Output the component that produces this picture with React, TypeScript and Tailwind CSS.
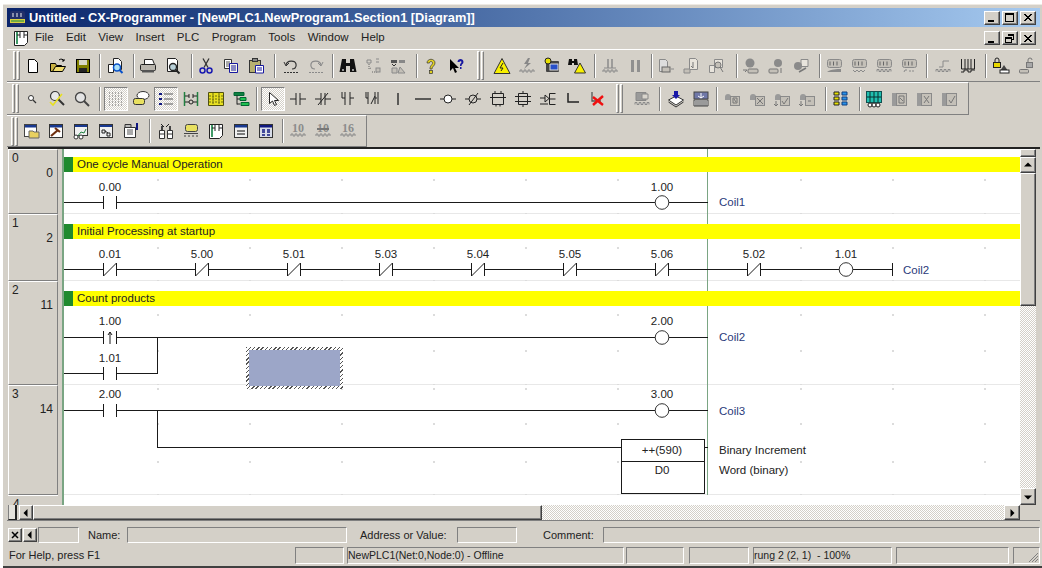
import React from 'react';

const grayS = '#8a8a8a';
const grayF = '#c4c0b8';

// small helpers for the disabled toolbar glyphs
const Wave = ({ y = 14 }: { y?: number }) => (
  <path d={`M2 ${y + 2}v-2h2v2h2v-2h2v2h2v-2h2v2h2v-2h2v2`} fill="none" stroke={grayS} />
);
const GPlc = ({ dark, children }: { dark?: boolean; children?: React.ReactNode }) => (
  <>
    <rect x="2.5" y="2.5" width="14" height="8" rx="2" fill={dark ? '#8a8a8a' : grayF} stroke={grayS} />
    <path d="M5 4.5v4M8.5 4.5v4M12 4.5v4" stroke={dark ? '#eee' : '#666'} />
    {children}
  </>
);
const GNote = ({ mark }: { mark: string }) => (
  <>
    <path d="M2 7a3 3 0 016 0v3H2z" fill="#9a9a9a" />
    <rect x="7.5" y="6.5" width="9" height="9" fill={grayF} stroke={grayS} />
    <path d={mark} fill="none" stroke="#777" />
  </>
);
const GBook = ({ mark }: { mark: string }) => (
  <>
    <path d="M2 3h5v13H2z" fill="#9a9a9a" />
    <rect x="6.5" y="3.5" width="10" height="12" fill={grayF} stroke={grayS} />
    <path d={mark} fill="none" stroke="#777" />
  </>
);
const GNum = ({ t, slash }: { t: string; slash?: boolean }) => (
  <>
    <text x="9" y="10" textAnchor="middle" fontSize="12" fontWeight="bold" fontFamily="Liberation Serif, serif" fill="#8c8c8c">{t}</text>
    {slash && <path d="M3 7h12" stroke="#777" strokeWidth="2" />}
    <Wave y={12} />
  </>
);

const icons: Record<string, React.ReactNode> = {
  new: <path d="M4.5 2.5h6l3 3v10h-9z" fill="#fff" stroke="#000" />,
  open: (
    <>
      <path d="M1.5 6.5h5l1 2h5v6h-11z" fill="#c8b040" stroke="#000" />
      <path d="M3.5 14.5l3-5h10l-3 5z" fill="#f0dc70" stroke="#000" />
      <path d="M10 3c2-1.5 4-1 5 1M15 2v2h-2" fill="none" stroke="#000" />
    </>
  ),
  save: (
    <>
      <rect x="2.5" y="2.5" width="13" height="13" fill="#808000" stroke="#000" />
      <rect x="5" y="3" width="8" height="5" fill="#d8d8c8" />
      <rect x="5" y="11" width="8" height="4" fill="#222" />
    </>
  ),
  docfind: (
    <>
      <path d="M2.5 7.5h5v8h-5z" fill="#fff" stroke="#222" />
      <path d="M7.5 1.5h5l3 3v8h-8z" fill="#fff" stroke="#222" />
      <circle cx="11" cy="10.5" r="3.5" fill="#a8e0f8" stroke="#0850c8" strokeWidth="1.5" />
      <path d="M13.5 13l3 3" stroke="#0850c8" strokeWidth="2" />
    </>
  ),
  print: (
    <>
      <path d="M5.5 2.5h8l2 5h-10z" fill="#fff" stroke="#222" />
      <rect x="1.5" y="7.5" width="15" height="6" rx="1" fill="#b8b4ac" stroke="#222" />
      <rect x="3" y="13" width="12" height="2.5" fill="#555" />
    </>
  ),
  preview: (
    <>
      <path d="M3.5 1.5h8l2 2v11h-10z" fill="#fff" stroke="#222" />
      <circle cx="9" cy="10" r="3.5" fill="#b8d0d8" stroke="#222" strokeWidth="1.3" />
      <path d="M11.5 12.5l4 4" stroke="#222" strokeWidth="2" />
    </>
  ),
  cut: (
    <>
      <path d="M6 1.5l5 9M12 1.5l-5 9" stroke="#333" strokeWidth="1.3" />
      <circle cx="5.5" cy="13.5" r="2.5" fill="none" stroke="#1818b0" strokeWidth="1.5" />
      <circle cx="12.5" cy="13.5" r="2.5" fill="none" stroke="#1818b0" strokeWidth="1.5" />
    </>
  ),
  copy: (
    <>
      <path d="M2.5 2.5h7v9h-7z" fill="#fff" stroke="#333" />
      <path d="M4 5h4M4 7h4M4 9h4" stroke="#555" />
      <path d="M7.5 6.5h8v9h-8z" fill="#f8f8e8" stroke="#1818a0" />
      <path d="M9 9h5M9 11h5M9 13h5" stroke="#1818a0" />
    </>
  ),
  paste: (
    <>
      <rect x="2.5" y="3.5" width="11" height="12" fill="#b8b070" stroke="#333" />
      <rect x="5.5" y="1.5" width="5" height="3" fill="#888" stroke="#333" />
      <path d="M8.5 8.5h8V16h-8z" fill="#fff" stroke="#1818a0" />
      <path d="M10 11h5M10 13h5" stroke="#1818a0" />
    </>
  ),
  undo: (
    <>
      <path d="M4 8c1-5 9-5 10-1s-2 5-4 5" fill="none" stroke="#333" strokeWidth="1.2" />
      <path d="M2 5l2 4 3-3" fill="none" stroke="#333" />
      <path d="M2 15.5h14" stroke="#333" strokeDasharray="2 1" />
    </>
  ),
  redo: (
    <>
      <path d="M14 8c-1-5-9-5-10-1s2 5 4 5" fill="none" stroke={grayS} strokeWidth="1.2" />
      <path d="M16 5l-2 4-3-3" fill="none" stroke={grayS} />
      <path d="M2 15.5h14" stroke={grayS} strokeDasharray="2 1" />
    </>
  ),
  binoc: (
    <>
      <path d="M3 2h4v4h4V2h4l2.5 13H11V9H7v6H.5z" fill="#111" />
      <rect x="3" y="12" width="2" height="2" fill="#999" />
      <rect x="13" y="12" width="2" height="2" fill="#999" />
    </>
  ),
  swap: (
    <>
      <path d="M3 3h4v3H3zM12 2h3M12 5h3" fill="none" stroke={grayS} />
      <path d="M5 7v5l2-1M13 15H8" fill="none" stroke="#666" strokeDasharray="1 1" />
      <rect x="12" y="11" width="4" height="4" fill={grayF} stroke={grayS} />
    </>
  ),
  xref: (
    <>
      <path d="M2 3h6v3H2z" fill="#555" />
      <path d="M3 7l2 2 2-2" fill="none" stroke="#333" />
      <path d="M10 3h6v3h-6z" fill="#888" />
      <path d="M3 11h5v5H3zM11 10l5 6H9z" fill={grayF} stroke={grayS} />
    </>
  ),
  help: (
    <>
      <path d="M5 6c0-5 8-5 8 0 0 3-3 3-3 6H8c0-4 2.500-4 2.500-6 0-2-3-2-3 0z" fill="#e0d020" stroke="#333" strokeWidth=".7" />
      <rect x="7.5" y="13.5" width="3" height="3" fill="#e0d020" stroke="#333" strokeWidth=".7" />
    </>
  ),
  whats: (
    <>
      <path d="M3 2v12l3-3 2 5 2-1-2-4h4z" fill="#000" />
      <path d="M10.500 5c0-4 6-4 6 0 0 2-2 2-2 4h-1.500c0-3 1.500-3 1.500-4s-2-1-2 0zM13 10h1.500v2H13z" fill="#1818a0" />
    </>
  ),
  warn: (
    <>
      <path d="M9 1.5l8 15H1z" fill="#f8f000" stroke="#333" />
      <path d="M10 6l-3 5h3l-2 3" fill="none" stroke="#222" />
    </>
  ),
  flash: (
    <>
      <path d="M10 1L6 7h3L6 12l7-6h-3l2-5z" fill="#888" />
      <Wave y={13} />
    </>
  ),
  compile: (
    <>
      <rect x="3" y="4" width="13" height="11" rx="1" fill="#444" />
      <rect x="7" y="7" width="8" height="6" fill="#2850c8" stroke="#ddd" />
      <circle cx="5" cy="4" r="3" fill="#e8e000" stroke="#222" />
    </>
  ),
  binwarn: (
    <>
      <path d="M1 2h3v2h2V2h3l1 6H6V6H4v2H0z" fill="#111" />
      <path d="M12 6l5.5 10h-11z" fill="#f8f000" stroke="#333" />
    </>
  ),
  gII: (
    <>
      <path d="M7 2v9M11 2v9" stroke={grayS} strokeWidth="1.5" />
      <path d="M3 11h12" stroke={grayS} />
      <Wave y={13} />
    </>
  ),
  gPause: <path d="M5 3h3v12H5zM11 3h3v12h-3z" fill="#909090" />,
  gDoc: (
    <>
      <path d="M2.5 2.5h6l2 2v10h-8z" fill="#ddd" stroke={grayS} />
      <rect x="5" y="10" width="8" height="5" fill={grayF} stroke="#666" />
      <path d="M14 12h3" stroke={grayS} />
    </>
  ),
  gDocUp: (
    <>
      <path d="M7.5 1.5h6l2 2v9h-8z" fill="#e8e4dc" stroke={grayS} />
      <path d="M2 12h6v4H2z" fill={grayF} stroke={grayS} />
      <path d="M11 5v6l-2-2" fill="none" stroke="#777" />
    </>
  ),
  gDocX: (
    <>
      <path d="M2.5 8.5h5v7h-5z" fill="#e8e4dc" stroke={grayS} />
      <path d="M7.5 2.5h8v8h-8z" fill="#e8e4dc" stroke={grayS} />
      <circle cx="11" cy="8" r="3" fill={grayF} stroke="#777" />
      <path d="M13 10l3 5" stroke="#777" />
    </>
  ),
  gGear: (
    <>
      <circle cx="8" cy="6" r="4.5" fill="#8a8a8a" />
      <rect x="6" y="12" width="10" height="4" rx="1" fill={grayF} stroke="#777" />
      <path d="M1 13h4l-2 2" fill="none" stroke="#777" />
    </>
  ),
  gGear2: (
    <>
      <circle cx="11" cy="6" r="4" fill="#8a8a8a" />
      <rect x="2" y="12" width="9" height="4" rx="1" fill={grayF} stroke="#777" />
      <path d="M14 11v5" stroke="#777" />
    </>
  ),
  gGear3: (
    <>
      <path d="M9 2.5h7v7H9z" fill="#e8e4dc" stroke={grayS} />
      <circle cx="6" cy="9" r="4" fill="#8a8a8a" />
      <path d="M7 15l7-4" stroke="#777" strokeWidth="1.5" />
    </>
  ),
  gPlc1: (
    <GPlc>
      <path d="M2 15c4-3 10-3 14-3v3z" fill="#8a8a8a" />
    </GPlc>
  ),
  gPlc2: (
    <GPlc>
      <path d="M3 13l2 2 2-2 2 2 2-2 2 2 2-2" fill="none" stroke={grayS} />
    </GPlc>
  ),
  gPlc3: (
    <GPlc>
      <Wave y={12.5} />
    </GPlc>
  ),
  gPlc4: (
    <GPlc>
      <path d="M4 15l1-2h2M10 15v-2M13 13v2" fill="none" stroke={grayS} />
    </GPlc>
  ),
  gStep: (
    <>
      <path d="M5 10h4V4h6" fill="none" stroke={grayS} />
      <Wave y={12.5} />
    </>
  ),
  bars: <path d="M2.5 2v10h13V2M6 2v10M9 2v10M12 2v10M2 15h3v-2h4v2h3v-2h4" fill="none" stroke="#222" />,
  lock: (
    <>
      <rect x="1.5" y="5.5" width="7" height="5" fill="#e8d800" stroke="#222" />
      <path d="M3 5V3a2 2 0 014 0v2" fill="none" stroke="#222" />
      <path d="M12 8l4 6H8z" fill="#444" />
      <rect x="8" y="13" width="9" height="3" fill="#fff" stroke="#222" />
    </>
  ),
  glock: (
    <>
      <rect x="9.5" y="5.5" width="6" height="5" fill="#a8a8a8" stroke="#777" />
      <path d="M11 5V3a2 2 0 014 0" fill="none" stroke="#777" />
      <rect x="2.5" y="12.5" width="9" height="3.5" rx="1" fill={grayF} stroke="#777" />
    </>
  ),
  magS: (
    <>
      <circle cx="8" cy="8" r="2.5" fill="#fff" stroke="#333" />
      <path d="M10 10l3 3" stroke="#333" strokeWidth="1.3" />
    </>
  ),
  magC: (
    <>
      <circle cx="7" cy="6" r="4.5" fill="#e8e8e8" stroke="#333" strokeWidth="1.2" />
      <path d="M10 9l6 6" stroke="#333" strokeWidth="2" />
      <path d="M2 12l3 3 9-11" fill="none" stroke="#e8e020" strokeWidth="1.6" />
    </>
  ),
  mag: (
    <>
      <circle cx="7.5" cy="7.5" r="5" fill="#e4e4e4" stroke="#444" strokeWidth="1.3" />
      <path d="M11 11l5 5" stroke="#444" strokeWidth="2" />
    </>
  ),
  grid: <path d="M2 3h14M2 6h14M2 9h14M2 12h14M2 15h14" stroke="#666" strokeDasharray="1 2" fill="none" />,
  comment: (
    <>
      <ellipse cx="11" cy="5.5" rx="6" ry="4" fill="#fff" stroke="#333" />
      <rect x="1.5" y="8.5" width="11" height="6" rx="2" fill="#e8e060" stroke="#333" />
    </>
  ),
  list: (
    <>
      <path d="M7 4h9M7 9h9M7 14h9" stroke="#888" strokeWidth="1.5" />
      <path d="M2 3h3v2H2zM2 8h3v2H2zM2 13h3v2H2z" fill="#101880" />
    </>
  ),
  rung: (
    <>
      <path d="M2.5 2v14M15.5 2v14" stroke="#208040" strokeWidth="1.5" />
      <path d="M3 6h4M11 6h4M7 4v4M11 4v4M3 12h4M11 12h4" stroke="#222" />
      <circle cx="9" cy="12" r="2" fill="none" stroke="#222" />
    </>
  ),
  ylist: (
    <>
      <path d="M1.5 2.5h15v13h-15z" fill="#e8e020" stroke="#505010" />
      <path d="M6 3v12M12 3v12M2 6h14M2 9h14M2 12h14" stroke="#6a6a10" strokeDasharray="2 1" />
    </>
  ),
  tree: (
    <>
      <path d="M2 2.5h10v3H2z" fill="#108040" stroke="#063" />
      <path d="M5 5.5v9M5 9h3M5 14h3" stroke="#222" fill="none" />
      <path d="M8 7.5h6v3H8zM9 12.5h8v3H9z" fill="#20c050" stroke="#063" />
    </>
  ),
  arrow: <path d="M5.5 2.5v11l3-2.5 2 4.5 2-1-2-4h4z" fill="#fff" stroke="#222" />,
  no: <path d="M1 9h6M7 3v12M11 3v12M11 9h6" stroke="#222" fill="none" />,
  nc: <path d="M1 9h6M7 3v12M11 3v12M11 9h6M4 15L14 3" stroke="#222" fill="none" />,
  hno: <path d="M3 2v6h3M6 2v13M11 2v13M11 8h4" stroke="#222" fill="none" />,
  hnc: <path d="M2 2v6h2M4 2v12M7 14l4-8M11 2v12M11 8h2M14 2v12" stroke="#222" fill="none" />,
  vline: <path d="M9 3v12" stroke="#333" strokeWidth="1.5" />,
  hline: <path d="M1 9h16" stroke="#333" strokeWidth="1.5" />,
  coil: (
    <>
      <path d="M1 9h4M13 9h4" stroke="#222" />
      <circle cx="9" cy="9" r="4" fill="#fff" stroke="#222" />
    </>
  ),
  coiln: (
    <>
      <path d="M1 9h4M13 9h4M5 15L14 3" stroke="#222" />
      <circle cx="9" cy="9" r="4" fill="none" stroke="#222" />
    </>
  ),
  box: <path d="M3.5 3.5h11v11h-11zM1 7.5h16M7 14.5v2M11 14.5v2M6 1v2M12 1v2" stroke="#222" fill="none" />,
  box2: <path d="M4.5 3.5h9v11h-9zM1 6.5h16M1 11.5h16M9 1v2M9 15v2" stroke="#222" fill="none" />,
  instr: <path d="M1 8h5M6 5v7l4-3.5zM1 14h8M10.5 3.5h6M10.5 3.5v11M10.5 9h6M10.5 14.5h6" stroke="#222" fill="none" />,
  corner: <path d="M4 3v9h11" stroke="#222" strokeWidth="1.5" fill="none" />,
  del: (
    <>
      <path d="M3 2v9h9" stroke="#555" strokeWidth="1.3" fill="none" />
      <path d="M4 7l10 8M14 6L4 15" stroke="#f01010" strokeWidth="2.4" />
    </>
  ),
  gDl: (
    <>
      <path d="M3 2.5h10v8H3z" fill="#9a9a9a" stroke="#888" />
      <path d="M9 4h6v5H9z" fill="#d8d4cc" stroke="#888" />
      <Wave y={12.5} />
    </>
  ),
  dlst: (
    <>
      <path d="M1.5 10L9 6l7.5 4L9 15z" fill="#fff" stroke="#333" />
      <path d="M1.5 12L9 17l7.5-5" fill="none" stroke="#333" />
      <path d="M7 1h4v4h2l-4 4-4-4h2z" fill="#1818a8" />
    </>
  ),
  dlbd: (
    <>
      <rect x="2" y="2" width="14" height="7" fill="#7078a8" stroke="#444" />
      <path d="M9 3v5M6 6l3 2 3-2" stroke="#fff" fill="none" />
      <path d="M2 10h14v6H2z" fill="#f0f0f0" stroke="#444" />
      <path d="M4 11v5M6 11v5M8 11v5M10 11v5M12 11v5M14 11v5" stroke="#444" />
    </>
  ),
  gN1: <GNote mark="M10 8h4v5h-4zM11 9l2 3" />,
  gN2: <GNote mark="M9 8l6 6M15 8l-6 6" />,
  gN3: <GNote mark="M9 11l2 3 4-6M3 11v5M1 14l2 2 2-2" />,
  gN4: <GNote mark="M10 11h3M3 11v5M1 14l2 2 2-2" />,
  rows: (
    <>
      <path d="M2 2h5v3H2zM2 7h5v3H2zM2 12h5v3H2z" fill="#e8e000" stroke="#222" />
      <path d="M10 2h5v3h-5zM10 7h5v3h-5zM10 12h5v3h-5z" fill="#2890e8" stroke="#104080" />
    </>
  ),
  sim: (
    <>
      <rect x="1.5" y="1.5" width="15" height="11" fill="#20c0b0" stroke="#105050" />
      <path d="M5 2v10M9 2v10M13 2v10M2 7h14" stroke="#083030" />
      <circle cx="5" cy="15" r="2" fill="#fff" stroke="#222" />
      <circle cx="9" cy="15" r="2" fill="#fff" stroke="#222" />
      <circle cx="13" cy="15" r="2" fill="#fff" stroke="#222" />
    </>
  ),
  gB1: <GBook mark="M9 6h5v7H9zM10 8l3 3" />,
  gB2: <GBook mark="M9 6l5 7M14 6l-5 7" />,
  gB3: <GBook mark="M9 10l2 3 4-7" />,
  win: (
    <>
      <rect x="2.5" y="2.5" width="12" height="12" fill="#fff" stroke="#444" />
      <rect x="3" y="3" width="11" height="2.5" fill="#183890" />
      <path d="M7 9h4l1 1h5v6H7z" fill="#e8d060" stroke="#666" />
    </>
  ),
  hammer: (
    <>
      <rect x="2.5" y="2.5" width="13" height="13" fill="#fff" stroke="#333" />
      <rect x="3" y="3" width="12" height="2.5" fill="#183890" />
      <path d="M4 14l7-6M8 6l5 4" stroke="#703010" strokeWidth="2.2" />
    </>
  ),
  net: (
    <>
      <rect x="2.5" y="2.5" width="13" height="11" fill="#f0f0f0" stroke="#333" />
      <rect x="3" y="3" width="12" height="2" fill="#183890" />
      <path d="M5 15l4-5 3 1 2-4" stroke="#208040" fill="none" />
      <circle cx="4" cy="15" r="2" fill="#fff" stroke="#333" />
      <circle cx="9" cy="15" r="2" fill="#fff" stroke="#333" />
    </>
  ),
  net2: (
    <>
      <rect x="2.5" y="2.5" width="13" height="13" fill="#f0f0f0" stroke="#333" />
      <rect x="3" y="3" width="12" height="2" fill="#183890" />
      <path d="M5 8h3v3H5zM10 11h3v3h-3zM8 9l3 2" stroke="#222" fill="none" />
    </>
  ),
  props: (
    <>
      <path d="M2.5 5.5h11v10h-11z" fill="#fff" stroke="#333" />
      <path d="M3 2.5h6v3H3z" fill="#bbb" stroke="#333" />
      <path d="M5 8h6M5 10h6M5 12h6" stroke="#555" />
      <path d="M15 1v7" stroke="#101880" strokeWidth="2" />
    </>
  ),
  tree2: (
    <>
      <path d="M4 2l3 3M12 2L9 5" stroke="#222" />
      <path d="M2.5 8.5h5v8h-5zM10.5 8.5h5v8h-5z" fill="#fff" stroke="#333" />
      <path d="M5 8V4M13 8V4" stroke="#444" strokeWidth="2" />
      <path d="M3 12h4M11 12h4" stroke="#333" />
    </>
  ),
  plc: (
    <>
      <rect x="3.5" y="2.5" width="12" height="7" rx="2" fill="#e8e060" stroke="#444" />
      <path d="M2 11.5h14" stroke="#444" />
      <path d="M3 13v3M7 13v3M11 13v3M15 13v3" stroke="#444" strokeDasharray="2 1" />
    </>
  ),
  ladder: (
    <>
      <path d="M2.5 2.5h13v11l-3 3h-10z" fill="#fff" stroke="#222" />
      <path d="M5 3v12" stroke="#108040" strokeWidth="1.6" />
      <path d="M8 2v7M12 2v7M5 6h3M12 6h3" stroke="#222" />
    </>
  ),
  form: (
    <>
      <rect x="2.5" y="2.5" width="13" height="13" fill="#f0f0f0" stroke="#333" />
      <rect x="3" y="3" width="12" height="2.5" fill="#183890" />
      <path d="M5 9h8M5 12h8" stroke="#555" strokeWidth="1.5" />
    </>
  ),
  hexv: (
    <>
      <rect x="2.5" y="2.5" width="13" height="13" fill="#d8dce8" stroke="#333" />
      <rect x="3" y="3" width="12" height="2.5" fill="#101880" />
      <path d="M5 8h3M10 8h3M5 10h3M10 10h3M5 13h3M10 13h3" stroke="#101880" strokeWidth="1.3" />
    </>
  ),
  n10: <GNum t="10" />,
  n10b: <GNum t="10" slash />,
  n16: <GNum t="16" />,
};

const btnUp = 'border border-t-white border-l-white border-r-[#404040] border-b-[#404040] shadow-[inset_-1px_-1px_0_#808080] bg-[#d4d0c8]';
const sunken = 'border border-t-[#808080] border-l-[#808080] border-r-white border-b-white';
const hatch = 'bg-[repeating-conic-gradient(#d4d0c8_0_25%,#fff_0_50%)] bg-[length:2px_2px]';

const Ico = ({ i }: { i: string }) => (
  <svg width="18" height="18" viewBox="0 0 18 18">{icons[i]}</svg>
);

// toolbar button, 25px pitch like the real toolbars
const Btn = ({ i, active }: { i: string; active?: boolean }) => (
  <div className="w-[25px] h-[24px] flex items-center justify-center shrink-0">
    {active ? (
      <div className={`w-[24px] h-[24px] flex items-center justify-center ${sunken} ${hatch}`}>
        <Ico i={i} />
      </div>
    ) : (
      <Ico i={i} />
    )}
  </div>
);
const G = ({ n }: { n: string }) => (
  <>
    {n.split(' ').map((i, k) => (
      <Btn key={k} i={i} />
    ))}
  </>
);
const Sep = ({ className }: { className: string }) => (
  <div className={`w-[2px] h-[24px] shrink-0 border-l border-l-[#808080] border-r border-r-white ${className}`} />
);
const Grip = ({ className = '' }: { className?: string }) => (
  <div className={`flex gap-[1px] h-[29px] shrink-0 ${className}`}>
    <div className="w-[3px] border-l border-l-white border-r border-r-[#808080] border-t border-t-white border-b border-b-[#808080]" />
    <div className="w-[3px] border-l border-l-white border-r border-r-[#808080] border-t border-t-white border-b border-b-[#808080]" />
  </div>
);

const Toolbar1 = () => (
  <div className="flex items-center h-[33px] border-t border-t-white border-b border-b-[#808080] shrink-0">
    <Grip className="ml-[6px]" />
    <G n="new open save" />
    <Sep className="ml-[4px] mr-[1px]" />
    <G n="docfind" />
    <Sep className="ml-[6px]" />
    <G n="print preview" />
    <Sep className="ml-[6px]" />
    <G n="cut copy paste" />
    <Sep className="ml-[6px] mr-[2px]" />
    <G n="undo redo" />
    <Sep className="ml-[4px] mr-[1px]" />
    <G n="binoc swap xref" />
    <Sep className="ml-[6px]" />
    <G n="help whats" />
    <Grip className="ml-[9px] mr-[5px]" />
    <G n="warn flash compile binwarn" />
    <Sep className="ml-[5px] mr-[1px]" />
    <G n="gII gPause" />
    <Sep className="ml-[4px]" />
    <G n="gDoc gDocUp gDocX" />
    <Sep className="ml-[8px]" />
    <G n="gGear gGear2 gGear3" />
    <Sep className="ml-[6px]" />
    <G n="gPlc1 gPlc2 gPlc3 gPlc4" />
    <Sep className="ml-[5px] mr-[2px]" />
    <G n="gStep bars" />
    <Sep className="ml-[5px] mr-[1px]" />
    <G n="lock glock" />
  </div>
);

const Toolbar2 = () => (
  <div className="flex items-center h-[33px] w-[962px] border-t border-t-white border-b border-b-[#808080] border-r border-r-[#808080] shrink-0">
    <Grip className="ml-[5px]" />
    <G n="magS magC mag" />
    <Sep className="ml-[5px] mr-[2px]" />
    <Btn i="grid" active />
    <G n="comment" />
    <Btn i="list" active />
    <G n="rung ylist tree" />
    <Sep className="ml-[3px] mr-[2px]" />
    <Btn i="arrow" active />
    <G n="no nc hno hnc vline hline coil coiln box box2 instr corner del" />
    <Grip className="ml-[6px] mr-[6px]" />
    <G n="gDl" />
    <Sep className="ml-[5px] mr-[2px]" />
    <G n="dlst dlbd" />
    <Sep className="ml-[3px] mr-[1px]" />
    <G n="gN1 gN2 gN3 gN4" />
    <Sep className="ml-[6px] mr-[1px]" />
    <G n="rows" />
    <Sep className="ml-[6px]" />
    <G n="sim gB1 gB2 gB3" />
  </div>
);

const Toolbar3 = () => (
  <div className="flex items-center h-[32px] w-[360px] border-t border-t-white border-b border-b-[#808080] border-r border-r-[#808080] shrink-0">
    <Grip className="ml-[4px]" />
    <G n="win hammer net net2 props" />
    <Sep className="ml-[6px] mr-[2px]" />
    <G n="tree2 plc ladder form hexv" />
    <Sep className="ml-[4px] mr-[1px]" />
    <G n="n10 n10b n16" />
  </div>
);

const Caption = ({ kind }: { kind: 'min' | 'max' | 'restore' | 'close' }) => (
  <div className={`w-[16px] h-[14px] flex items-center justify-center ${btnUp}`}>
    <svg width="10" height="9" viewBox="0 0 10 9" shapeRendering="crispEdges">
      {kind === 'min' && <rect x="1" y="7" width="6" height="2" fill="#000" />}
      {kind === 'max' && <path d="M.5 1.5h8v7h-8zM0 .5h9" fill="none" stroke="#000" />}
      {kind === 'restore' && <path d="M2.5 .5h6v5h-2M2.5 1.5h6M.5 3.5h6v5h-6zM.5 4.5h6" fill="none" stroke="#000" />}
      {kind === 'close' && <path d="M1 1l7 7M2 1l7 7M8 1L1 8M9 1L2 8" fill="none" stroke="#000" shapeRendering="auto" />}
    </svg>
  </div>
);

const CaptionGroup = ({ middle }: { middle: 'max' | 'restore' }) => (
  <div className="flex gap-[2px] shrink-0">
    <Caption kind="min" />
    <Caption kind={middle} />
    <Caption kind="close" />
  </div>
);

const wire = '#1a1a1a';
const H = ({ a, b, y }: { a: number; b: number; y: number }) => <path d={`M${a} ${y + 0.5}H${b}`} stroke={wire} />;
const Rails = ({ x, y }: { x: number; y: number }) => (
  <path d={`M${x - 6.5} ${y - 6}v13M${x + 6.5} ${y - 6}v13`} stroke={wire} />
);
const NO = ({ x, y }: { x: number; y: number }) => <Rails x={x} y={y} />;
const NC = ({ x, y }: { x: number; y: number }) => (
  <>
    <Rails x={x} y={y} />
    <path d={`M${x - 6.5} ${y + 7}L${x + 6.5} ${y - 6}`} stroke={wire} shapeRendering="auto" />
  </>
);
const Rise = ({ x, y }: { x: number; y: number }) => (
  <>
    <Rails x={x} y={y} />
    <path d={`M${x} ${y + 7}V${y - 5}M${x - 2} ${y - 2}l2-3 2 3`} stroke={wire} fill="none" shapeRendering="auto" />
  </>
);
const Coil = ({ x, y }: { x: number; y: number }) => (
  <circle cx={x} cy={y + 0.5} r="6.8" fill="#fff" stroke="#333" shapeRendering="auto" />
);

// grid dots every 92px; the svg works in page x so numbers match the screenshot
const Dots = ({ ys }: { ys: number[] }) => (
  <>
    {ys.flatMap((y) =>
      [157, 249, 341, 433, 525, 617, 800, 892, 984].map((x) => (
        <rect key={`${x}-${y}`} x={x} y={y} width="2" height="2" fill="#dcdcdc" />
      )),
    )}
  </>
);

type Lbl = { x: number; y: number; t: string; c?: string };

const RungCanvas = ({
  h,
  comment,
  dots,
  labels,
  children,
}: {
  h: number;
  comment?: { t: string; top: number };
  dots: number[];
  labels: Lbl[];
  children?: React.ReactNode;
}) => (
  <div className="relative w-[956px] bg-white border-b border-b-[#e8e8e8] shrink-0 text-[11.5px]" style={{ height: h }}>
    <svg width="956" height={h} viewBox={`64 0 956 ${h}`} className="absolute left-0 top-0" shapeRendering="crispEdges">
      <Dots ys={dots} />
      <path d={`M707.5 0V${h}`} stroke="#7aa583" />
      {children}
    </svg>
    {comment && (
      <div className="absolute left-0 right-0 h-[15px] flex items-center bg-[#ffff00]" style={{ top: comment.top }}>
        <div className="w-[9px] h-[15px] bg-[#1f8a2e] mr-[4px]" />
        <span className="text-[#222]">{comment.t}</span>
      </div>
    )}
    {labels.map((l, k) => (
      <span
        key={k}
        className={`absolute leading-[14px] whitespace-nowrap ${l.c === 'c' ? '-translate-x-1/2 text-[#222]' : l.c === 'b' ? 'text-[#2a3a7a]' : 'text-[#222]'}`}
        style={{ left: l.x - 64, top: l.y - 7 }}
      >
        {l.t}
      </span>
    ))}
  </div>
);

const Gutter = ({ h, a, b }: { h: number; a: string; b: string }) => (
  <div className="w-[50px] shrink-0 bg-[#d4d0c8] border-t border-t-white border-l border-l-white border-r border-r-[#808080] border-b border-b-[#808080] pl-[3px] pr-[4px] pt-[1px] leading-[15px] text-[#222]" style={{ height: h }}>
    <div>{a}</div>
    <div className="text-right">{b}</div>
  </div>
);

const Spacer = () => <div className="w-[6px] shrink-0 border-r-2 border-r-[#7aa583]" />;

const Arrow = ({ d }: { d: 'l' | 'r' | 'u' | 'd' }) => (
  <svg width="8" height="8" viewBox="0 0 8 8">
    {d === 'l' && <path d="M5.5 0v8l-4-4z" fill="#000" />}
    {d === 'r' && <path d="M2.5 0v8l4-4z" fill="#000" />}
    {d === 'u' && <path d="M0 5.5h8l-4-4z" fill="#000" />}
    {d === 'd' && <path d="M0 2.5h8l-4 4z" fill="#000" />}
  </svg>
);

const Diagram = () => (
  <div className="flex h-[373px] shrink-0 ml-[1px] border-t-2 border-t-[#222]">
    <div className="flex flex-col w-[1012px] shrink-0">
      <div className="flex flex-col h-[356px] overflow-hidden">
        <div className="flex">
          <Gutter h={65} a="0" b="0" />
          <Spacer />
          <RungCanvas
            h={65}
            comment={{ t: 'One cycle Manual Operation', top: 8 }}
            dots={[30, 64]}
            labels={[
              { x: 110, y: 38, t: '0.00', c: 'c' },
              { x: 662, y: 38, t: '1.00', c: 'c' },
              { x: 719, y: 53, t: 'Coil1', c: 'b' },
            ]}
          >
            <H a={64} b={104} y={53} />
            <H a={117} b={708} y={53} />
            <NO x={110} y={53} />
            <Coil x={662} y={53} />
          </RungCanvas>
        </div>
        <div className="flex">
          <Gutter h={67} a="1" b="2" />
          <Spacer />
          <RungCanvas
            h={67}
            comment={{ t: 'Initial Processing at startup', top: 10 }}
            dots={[33, 66]}
            labels={[
              ...[
                [110, '0.01'],
                [202, '5.00'],
                [294, '5.01'],
                [386, '5.03'],
                [478, '5.04'],
                [570, '5.05'],
                [662, '5.06'],
                [754, '5.02'],
                [846, '1.01'],
              ].map(([x, t]) => ({ x: x as number, y: 40, t: t as string, c: 'c' })),
              { x: 903, y: 56, t: 'Coil2', c: 'b' },
            ]}
          >
            <H a={64} b={892} y={55} />
            <path d="M892.5 49v13" stroke={wire} />
            {[110, 202, 294, 386, 478, 570, 662, 754].map((x) => (
              <g key={x}>
                <rect x={x - 6} y={50} width="12" height="10" fill="#fff" />
                <NC x={x} y={55} />
              </g>
            ))}
            <Coil x={846} y={55} />
          </RungCanvas>
        </div>
        <div className="flex">
          <Gutter h={104} a="2" b="11" />
          <Spacer />
          <RungCanvas
            h={104}
            comment={{ t: 'Count products', top: 10 }}
            dots={[33, 69, 103]}
            labels={[
              { x: 110, y: 40, t: '1.00', c: 'c' },
              { x: 110, y: 77, t: '1.01', c: 'c' },
              { x: 662, y: 40, t: '2.00', c: 'c' },
              { x: 719, y: 56, t: 'Coil2', c: 'b' },
            ]}
          >
            <H a={64} b={104} y={56} />
            <H a={117} b={708} y={56} />
            <H a={64} b={104} y={92} />
            <H a={117} b={157} y={92} />
            <path d="M157.5 56v37" stroke={wire} />
            <Rise x={110} y={56} />
            <NO x={110} y={92} />
            <Coil x={662} y={56} />
          </RungCanvas>
        </div>
        <div className="flex">
          <Gutter h={110} a="3" b="14" />
          <Spacer />
          <RungCanvas
            h={110}
            dots={[3, 38, 76, 109]}
            labels={[
              { x: 110, y: 9, t: '2.00', c: 'c' },
              { x: 662, y: 9, t: '3.00', c: 'c' },
              { x: 719, y: 26, t: 'Coil3', c: 'b' },
              { x: 662, y: 65, t: '++(590)', c: 'c' },
              { x: 662, y: 85, t: 'D0', c: 'c' },
              { x: 719, y: 65, t: 'Binary Increment' },
              { x: 719, y: 85, t: 'Word (binary)' },
            ]}
          >
            <H a={64} b={104} y={25} />
            <H a={117} b={708} y={25} />
            <NO x={110} y={25} />
            <Coil x={662} y={25} />
            <path d="M157.5 25v37.5H621" stroke={wire} fill="none" />
            <path d="M621.5 54.5h83v54h-83zM621.5 76.5h83" fill="#fff" stroke={wire} />
            <H a={704} b={708} y={62} />
          </RungCanvas>
        </div>
        <div className="flex h-[10px] overflow-hidden">
          <div className="w-[50px] shrink-0 bg-[#d4d0c8] border-t border-t-white pl-[5px] pt-[1px] leading-[15px] text-[#222]">4</div>
          <Spacer />
          <div className="w-[956px] bg-white" />
        </div>
      </div>
      {/* bottom scroll row */}
      <div className="flex h-[15px] shrink-0 items-stretch">
        <div className="w-[9px] border-l border-l-[#808080] border-r-2 border-r-[#222] border-b border-b-[#222] bg-[#e4e2dc] shrink-0" />
        <div className={`w-[14px] ml-[2px] flex items-center justify-center shrink-0 ${btnUp}`}>
          <Arrow d="l" />
        </div>
        <div className={`w-[509px] shrink-0 ${btnUp}`} />
        <div className={`flex-1 ${hatch}`} />
        <div className={`w-[16px] flex items-center justify-center shrink-0 ${btnUp}`}>
          <Arrow d="r" />
        </div>
      </div>
    </div>
    <div className="w-[16px] shrink-0 flex flex-col">
      <div className={`h-[8px] shrink-0 ${btnUp}`} />
      <div className={`h-[16px] shrink-0 flex items-center justify-center ${btnUp}`}>
        <Arrow d="u" />
      </div>
      <div className={`h-[133px] shrink-0 ${btnUp}`} />
      <div className={`flex-1 ${hatch}`} />
      <div className={`h-[17px] shrink-0 flex items-center justify-center ${btnUp}`}>
        <Arrow d="d" />
      </div>
      <div className="h-[15px] shrink-0" />
    </div>
  </div>
);

export default function App() {
  return (
    <div className="relative w-[1042px] h-[568px] bg-white pt-[4px] pl-[3px] overflow-hidden text-[12px] font-['Liberation_Sans',sans-serif] text-[#111]">
      <div className="h-[564px] bg-[#d4d0c8] border-t border-t-[#eeeae4] border-b-2 border-b-[#404040] pl-[4px] pr-[2px] pt-[3px] flex flex-col">
        {/* title bar */}
        <div className="h-[19px] shrink-0 flex items-center bg-gradient-to-r from-[#0a246a] to-[#a6caf0] pl-[2px] pr-[4px] gap-[3px]">
          <svg width="17" height="16" viewBox="0 0 17 16">
            <rect x="1" y="1" width="15" height="14" rx="2" fill="#22306a" />
            <path d="M4 3v4M8 3v4M12 3v4" stroke="#eee" />
            <rect x="1" y="9" width="15" height="4" fill="#d8d040" />
            <path d="M2 11h13" stroke="#184" />
          </svg>
          <span className="text-white font-bold text-[12.8px] flex-1 whitespace-nowrap">Untitled - CX-Programmer - [NewPLC1.NewProgram1.Section1 [Diagram]]</span>
          <CaptionGroup middle="max" />
        </div>
        {/* menu */}
        <div className="h-[22px] shrink-0 flex items-center pl-[5px] pr-[4px] text-[#222] text-[11.5px]">
          <Ico i="ladder" />
          <div className="flex gap-[12.5px] ml-[5px] flex-1">
            {['File', 'Edit', 'View', 'Insert', 'PLC', 'Program', 'Tools', 'Window', 'Help'].map((m) => (
              <span key={m}>{m}</span>
            ))}
          </div>
          <CaptionGroup middle="restore" />
        </div>
        <Toolbar1 />
        <Toolbar2 />
        <Toolbar3 />
        <div className="relative">
          <Diagram />
          {/* selection box over the ladder grid */}
          <div className="absolute left-[239px] top-[200px] w-[97px] h-[42px] p-[3px] bg-[repeating-linear-gradient(135deg,#555_0_1px,#fff_1px_3px)]">
            <div className="w-full h-full bg-[#9ca6c8]" />
          </div>
        </div>
        {/* address / name bar */}
        <div className="h-[25px] shrink-0 flex items-center pl-[1px] pt-[4px] border-t border-t-[#808080] text-[#222] text-[11px]">
          <div className={`w-[14px] h-[14px] flex items-center justify-center ${btnUp}`}>
            <svg width="8" height="8" viewBox="0 0 8 8"><path d="M1 1l6 6M7 1L1 7" stroke="#000" strokeWidth="1.5" /></svg>
          </div>
          <div className={`w-[14px] h-[14px] ml-[1px] flex items-center justify-center ${btnUp}`}>
            <Arrow d="l" />
          </div>
          <div className={`w-[41px] h-[16px] ml-[1px] ${sunken}`} />
          <span className="ml-[9px] w-[39px]">Name:</span>
          <div className={`w-[220px] h-[16px] ${sunken}`} />
          <span className="ml-[13px] w-[97px]">Address or Value:</span>
          <div className={`w-[60px] h-[16px] ${sunken}`} />
          <span className="ml-[26px] w-[60px]">Comment:</span>
          <div className={`flex-1 h-[16px] ${sunken}`} />
        </div>
        {/* status bar */}
        <div className="h-[20px] shrink-0 flex items-center gap-[2px] text-[#222] pl-[2px] text-[11px]">
          <span className="w-[284px] shrink-0">For Help, press F1</span>
          <div className={`w-[49px] h-[17px] ${sunken}`} />
          <div className={`w-[277px] h-[17px] ml-[1px] leading-[15px] text-[10.5px] whitespace-nowrap ${sunken}`}>NewPLC1(Net:0,Node:0) - Offline</div>
          <div className={`w-[58px] h-[17px] ${sunken}`} />
          <div className={`w-[60px] h-[17px] ml-[3px] ${sunken}`} />
          <div className={`w-[139px] h-[17px] ml-[2px] leading-[15px] text-[10.5px] whitespace-pre ${sunken}`}>rung 2 (2, 1)  - 100%</div>
          <div className={`w-[113px] h-[17px] ml-[2px] ${sunken}`} />
          <div className={`flex-1 h-[17px] ml-[2px] flex justify-end items-end ${sunken}`}>
            <svg width="12" height="12" viewBox="0 0 12 12"><path d="M11 2l-9 9M11 5l-6 6M11 8l-3 3" stroke="#808080" /></svg>
          </div>
        </div>
      </div>
    </div>
  );
}
